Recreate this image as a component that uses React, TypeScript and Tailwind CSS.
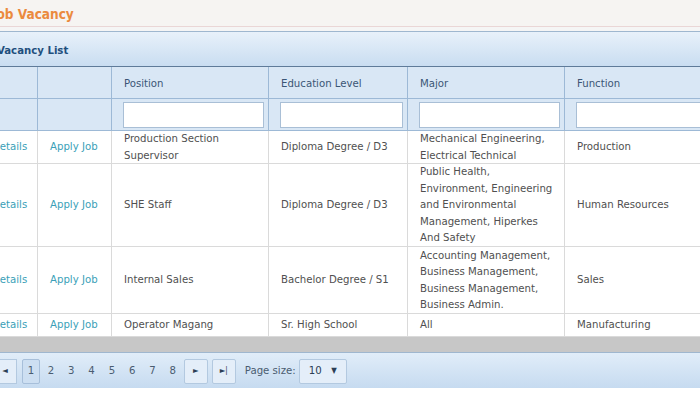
type Job = {
  position: string[];
  education: string;
  major: string[];
  fn: string;
  h: string;
};

const jobs: Job[] = [
  {
    position: ['Production Section', 'Supervisor'],
    education: 'Diploma Degree / D3',
    major: ['Mechanical Engineering,', 'Electrical Technical'],
    fn: 'Production',
    h: 'h-[32px]',
  },
  {
    position: ['SHE Staff'],
    education: 'Diploma Degree / D3',
    major: ['Public Health,', 'Environment, Engineering', 'and Environmental', 'Management, Hiperkes', 'And Safety'],
    fn: 'Human Resources',
    h: 'h-[82px]',
  },
  {
    position: ['Internal Sales'],
    education: 'Bachelor Degree / S1',
    major: ['Accounting Management,', 'Business Management,', 'Business Management,', 'Business Admin.'],
    fn: 'Sales',
    h: 'h-[66px]',
  },
  {
    position: ['Operator Magang'],
    education: 'Sr. High School',
    major: ['All'],
    fn: 'Manufacturing',
    h: 'h-[22px]',
  },
];

const cols = 'grid grid-cols-[58px_74px_157px_139px_157px_155px]';
const headCell = 'border-r border-[#9db9d6] pl-[12px] pr-[4px] flex items-center';
const bodyCell = 'border-r border-[#dadada] pl-[12px] pr-[2px] pt-[1px] flex items-center whitespace-nowrap overflow-hidden';

function Lines({ lines }: { lines: string[] }) {
  return (
    <div>
      {lines.map((l, i) => (
        <div key={i}>{l}</div>
      ))}
    </div>
  );
}

export default function App() {
  return (
    <div
      className="w-[700px] h-[393px] overflow-hidden bg-white text-[11.3px] leading-[16.5px] text-[#505050]"
      style={{ fontFamily: '"DejaVu Sans Condensed", "DejaVu Sans", sans-serif' }}
    >
      <div className="ml-[-20px] w-[740px]">
        {/* Page title */}
        <div className="h-[27px] bg-[#f6f4f2] border-b border-[#ead6d6] pl-[12px] flex items-center pt-[2px]">
          <h1 className="text-[13.5px] font-bold text-[#eb8a3e]">Job Vacancy</h1>
        </div>
        <div className="h-[4px] bg-[#f5f5f5]"></div>

        {/* Panel */}
        <div className="border-t border-[#9fb7cf]">
          <div className="h-[34px] bg-gradient-to-b from-[#e8f1fa] to-[#c9ddf1] pl-[17px] pt-[5px] flex items-center">
            <span className="text-[11.3px] font-bold text-[#1f4f7d]">Vacancy List</span>
          </div>

          {/* Column header */}
          <div className={`${cols} border-t border-[#5f7b99] bg-[#d9e7f5] text-[#3b5675]`}>
            <div className={`${headCell} h-[31px]`}></div>
            <div className={`${headCell} h-[31px]`}></div>
            <div className={`${headCell} h-[31px] pt-[4px]`}>Position</div>
            <div className={`${headCell} h-[31px] pt-[4px]`}>Education Level</div>
            <div className={`${headCell} h-[31px] pt-[4px]`}>Major</div>
            <div className={`${headCell} h-[31px] pt-[4px]`}>Function</div>
          </div>

          {/* Filter row */}
          <div className={`${cols} border-t border-b border-[#9db9d6] bg-[#d9e7f5]`}>
            <div className={`${headCell} h-[31px]`}></div>
            <div className={`${headCell} h-[31px]`}></div>
            {[0, 1, 2, 3].map((i) => (
              <div key={i} className="border-r border-[#9db9d6] pl-[11px] pr-[4px] flex items-center h-[31px]">
                <div className="w-full h-[26px] bg-white border border-[#a9bfd6]"></div>
              </div>
            ))}
          </div>

          {/* Rows */}
          {jobs.map((j, i) => (
            <div key={i} className={`${cols} border-b border-[#dadada]`}>
              <div className={`${bodyCell} ${j.h} text-[#3a9fb8]`}>Details</div>
              <div className={`${bodyCell} ${j.h} text-[#3a9fb8]`}>Apply Job</div>
              <div className={`${bodyCell} ${j.h}`}>
                <Lines lines={j.position} />
              </div>
              <div className={`${bodyCell} ${j.h}`}>{j.education}</div>
              <div className={`${bodyCell} ${j.h}`}>
                <Lines lines={j.major} />
              </div>
              <div className={`${bodyCell} ${j.h}`}>{j.fn}</div>
            </div>
          ))}

          {/* Scrollbar */}
          <div className="h-[15px] bg-[#c7c7c7]"></div>

          {/* Pager */}
          <div className="h-[36px] border-t border-[#9fb7cf] bg-gradient-to-b from-[#e1edf9] to-[#c6dbf0] flex items-center gap-[5px] pt-[2px] text-[#4a5c70]">
            <div className="w-[12px] h-[25px] border border-[#b3c9e0] bg-[#e4eef9] ml-[-4px]"></div>
            <div className="w-[24px] h-[25px] border border-[#b3c9e0] bg-[#e4eef9] flex items-center justify-center text-[8px] text-[#2c3e55]">
              ◄
            </div>
            <div className="w-[18px] h-[25px] border border-[#a7bfda] bg-[#cddff2] rounded-[2px] flex items-center justify-center">
              1
            </div>
            <div className="flex items-center gap-[10.3px] ml-[1px]">
              {[2, 3, 4, 5, 6, 7, 8].map((n) => (
                <span key={n} className="w-[10px] text-center">
                  {n}
                </span>
              ))}
            </div>
            <div className="w-[24px] h-[25px] border border-[#b3c9e0] bg-[#e4eef9] rounded-[2px] flex items-center justify-center text-[8px] text-[#2c3e55] ml-[1px]">
              ►
            </div>
            <div className="w-[24px] h-[25px] border border-[#b3c9e0] bg-[#e4eef9] rounded-[2px] flex items-center justify-center text-[8px] text-[#2c3e55] ml-[-1px]">
              ►|
            </div>
            <span className="ml-[4px]">Page size:</span>
            <div className="w-[48px] h-[25px] border border-[#b3c9e0] bg-[#e4eef9] rounded-[2px] flex items-center justify-between px-[9px] text-[#2c3e55] ml-[-2px]">
              <span>10</span>
              <span className="text-[8px]">▼</span>
            </div>
          </div>
          <div className="h-[10px] bg-white"></div>
        </div>
      </div>
    </div>
  );
}
